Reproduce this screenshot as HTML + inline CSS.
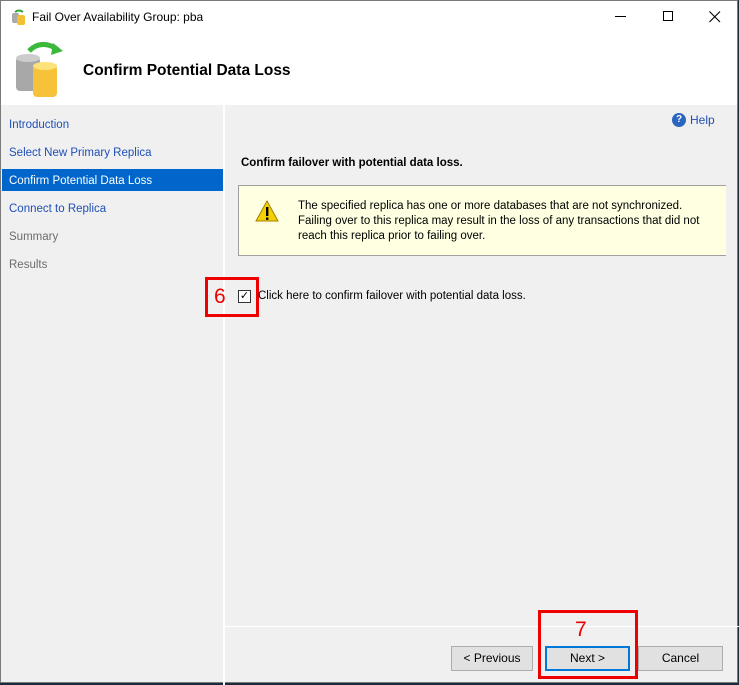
<!DOCTYPE html><html><head><style>
*{margin:0;padding:0;box-sizing:border-box}
body{width:739px;height:685px;background:#1a2a3a;font-family:"Liberation Sans",sans-serif;font-size:12px;position:relative;overflow:hidden}
.win{position:absolute;left:0;top:0;width:738px;height:683px;background:#f0f0f0;border:1px solid #7a7a7a}
.abs{position:absolute}
.nav{position:absolute;left:8px;color:#1f4fb5;font-size:11.5px}
.btn{position:absolute;top:645px;height:25px;background:#e1e1e1;border:1px solid #adadad;text-align:center;line-height:23px;font-size:12px;color:#000}
</style></head><body>
<div class="win">
<div class="abs" style="left:0;top:0;width:736px;height:104px;background:#fff"></div>
<div class="abs" style="left:10px;top:8px;width:14px;height:16px">
<svg width="16" height="16"><rect x="1" y="4" width="7" height="10" rx="2" fill="#aaa"/><rect x="6" y="6" width="8" height="10" rx="2" fill="#f2c030"/><path d="M4 3 Q8 0 12 3" stroke="#3a3" stroke-width="2" fill="none"/></svg></div>
<div class="abs" style="left:31px;top:9px;font-size:12px">Fail Over Availability Group: pba</div>
<div class="abs" style="left:614px;top:15px;width:11px;height:1px;background:#000"></div>
<div class="abs" style="left:662px;top:10px;width:10px;height:10px;border:1px solid #000"></div>
<svg class="abs" style="left:708px;top:10px" width="12" height="12"><path d="M0.5 0.5 L11 11 M11 0.5 L0.5 11" stroke="#000" stroke-width="1.1"/></svg>
<svg class="abs" style="left:12px;top:38px" width="52" height="60">
<path d="M16 12 Q28 0 44 10" stroke="#3cb83c" stroke-width="5" fill="none"/><path d="M40 4 L50 12 L38 16Z" fill="#3cb83c"/>
<rect x="3" y="18" width="24" height="34" rx="4" fill="#a8a8a8"/><ellipse cx="15" cy="19" rx="12" ry="4" fill="#ccc"/>
<rect x="20" y="26" width="24" height="32" rx="4" fill="#f5c23a"/><ellipse cx="32" cy="27" rx="12" ry="4" fill="#fde27a"/></svg>
<div class="abs" style="left:82px;top:61px;font-size:15.5px;font-weight:bold">Confirm Potential Data Loss</div>
<div class="abs" style="left:222px;top:104px;width:2px;height:580px;background:#fff"></div>
<div class="nav" style="top:118px">Introduction</div>
<div class="nav" style="top:146px">Select New Primary Replica</div>
<div class="abs" style="left:1px;top:168px;width:221px;height:22px;background:#0066cc"></div>
<div class="nav" style="top:174px;color:#fff">Confirm Potential Data Loss</div>
<div class="nav" style="top:202px">Connect to Replica</div>
<div class="nav" style="top:230px;color:#6d6d6d">Summary</div>
<div class="nav" style="top:258px;color:#6d6d6d">Results</div>
<div class="abs" style="left:671px;top:112px;width:14px;height:14px;border-radius:50%;background:#2a66c0;color:#fff;font-size:10px;font-weight:bold;text-align:center;line-height:14px">?</div>
<div class="abs" style="left:689px;top:112px;color:#1f4fb5">Help</div>
<div class="abs" style="left:240px;top:156px;font-weight:bold;font-size:11.5px">Confirm failover with potential data loss.</div>
<div class="abs" style="left:237px;top:184px;width:488px;height:71px;background:#ffffe1;border:1px solid #a0a0a0;border-right:none"></div>
<svg class="abs" style="left:253px;top:198px" width="26" height="26"><path d="M13 2 L24 22 L2 22Z" fill="#f5d000" stroke="#a08000"/><rect x="12" y="8" width="2.4" height="9" fill="#000"/><rect x="12" y="18.5" width="2.4" height="2.4" fill="#000"/></svg>
<div class="abs" style="left:297px;top:198px;font-size:11.5px;line-height:15px">The specified replica has one or more databases that are not synchronized.<br>Failing over to this replica may result in the loss of any transactions that did not<br>reach this replica prior to failing over.</div>
<div class="abs" style="left:204px;top:276px;width:54px;height:40px;border:3px solid #e00"></div>
<div class="abs" style="left:213px;top:284px;color:#e00;font-size:21px">6</div>
<div class="abs" style="left:237px;top:289px;width:13px;height:13px;border:1px solid #333;background:#fff;font-size:11px;line-height:11px;text-align:center">✓</div>
<div class="abs" style="left:257px;top:289px;font-size:11.5px">Click here to confirm failover with potential data loss.</div>
<div class="abs" style="left:224px;top:625px;width:514px;height:1px;background:#fff"></div>
<div class="abs" style="left:537px;top:609px;width:100px;height:69px;border:3px solid #e00"></div>
<div class="abs" style="left:574px;top:617px;color:#e00;font-size:21px">7</div>
<div class="btn" style="left:450px;width:82px">&lt; Previous</div>
<div class="btn" style="left:544px;width:85px;border:2px solid #0078d7;line-height:21px">Next &gt;</div>
<div class="btn" style="left:637px;width:85px">Cancel</div>
</div>
</body></html>
